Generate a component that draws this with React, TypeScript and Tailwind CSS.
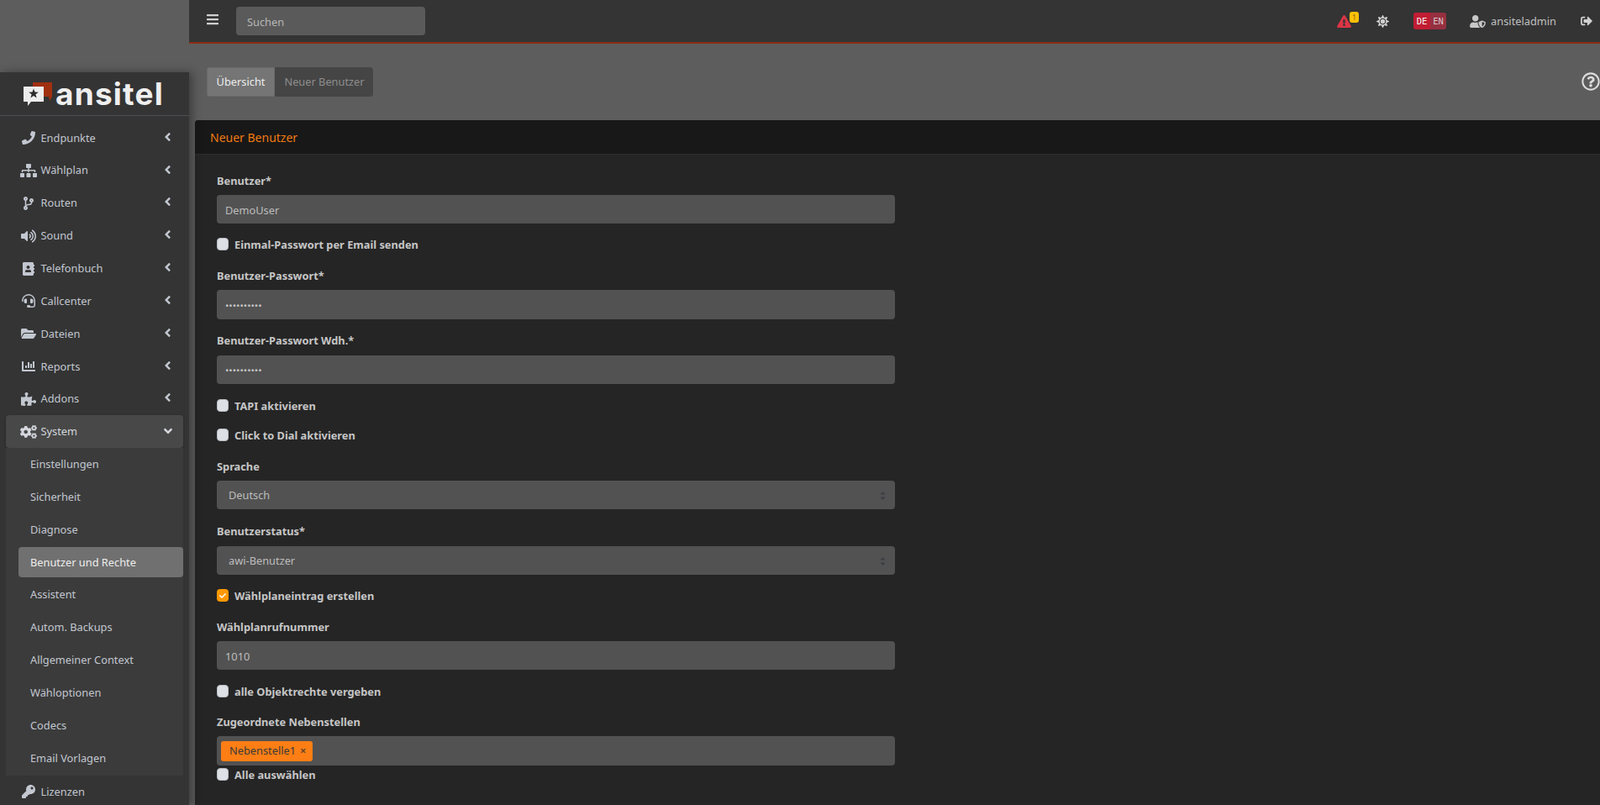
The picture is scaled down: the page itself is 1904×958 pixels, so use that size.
import type { ReactNode } from "react";
import {
  FaAddressBook,
  FaAngleDown,
  FaAngleLeft,
  FaBars,
  FaChartBar,
  FaCheck,
  FaCodeBranch,
  FaCogs,
  FaExclamationTriangle,
  FaFolderOpen,
  FaHeadset,
  FaKey,
  FaPhone,
  FaPuzzlePiece,
  FaRegQuestionCircle,
  FaSignOutAlt,
  FaSitemap,
  FaSun,
  FaUserShield,
  FaVolumeUp,
} from "react-icons/fa";

const font = "font-['Noto_Sans',sans-serif]";

const navTop = [
  { label: "Endpunkte", icon: <FaPhone className="w-[16px] h-[16px]" /> },
  { label: "Wählplan", icon: <FaSitemap className="w-[20px] h-[16px]" /> },
  { label: "Routen", icon: <FaCodeBranch className="w-[14px] h-[16px]" /> },
  { label: "Sound", icon: <FaVolumeUp className="w-[18px] h-[16px]" /> },
  { label: "Telefonbuch", icon: <FaAddressBook className="w-[14px] h-[16px]" /> },
  { label: "Callcenter", icon: <FaHeadset className="w-[16px] h-[16px]" /> },
  { label: "Dateien", icon: <FaFolderOpen className="w-[18px] h-[16px]" /> },
  { label: "Reports", icon: <FaChartBar className="w-[16px] h-[16px]" /> },
  { label: "Addons", icon: <FaPuzzlePiece className="w-[18px] h-[16px]" /> },
];

const subNav = [
  "Einstellungen",
  "Sicherheit",
  "Diagnose",
  "Benutzer und Rechte",
  "Assistent",
  "Autom. Backups",
  "Allgemeiner Context",
  "Wähloptionen",
  "Codecs",
  "Email Vorlagen",
];

function NavRow({ icon, label, open, noArrow }: { icon: ReactNode; label: string; open?: boolean; noArrow?: boolean }) {
  return (
    <div
      className={`flex items-center h-[38.85px] mx-[7px] w-[211px] text-[12.8px] ${
        open ? "bg-[#484848] rounded-[4px] shadow-[0_1px_3px_rgba(0,0,0,0.3)] text-[#d4d7dc]" : "text-[#c2c7d0]"
      }`}
    >
      <span className="ml-[14px] w-[26px] mr-[1.5px] flex justify-center shrink-0">{icon}</span>
      <span className="flex-1">{label}</span>
      {noArrow ? null : open ? (
        <FaAngleDown className="w-[14px] h-[16px] mr-[11px] -mt-[2px]" />
      ) : (
        <FaAngleLeft className="w-[11px] h-[16px] mr-[13px] -mt-[3px]" />
      )}
    </div>
  );
}

function Sidebar() {
  return (
    <aside className="w-[225px] shrink-0 mt-[86px] bg-[#343434] shadow-[4px_0_10px_rgba(0,0,0,0.35)] z-10 overflow-hidden">
      <div className="h-[52px] flex items-end border-b border-[#4b4f54] pl-[28px] pb-[11px]">
        <svg width="35" height="28" viewBox="0 0 35 28" className="shrink-0">
          <path d="M11 0h23v17l-3 5-1-5h-6V5H11z" fill="#a03010" />
          <path d="M0 5h24v18H9l-4 5v-5H0z" fill="#ededed" />
          <path
            d="M12 7.5l1.5 4 4.3.2-3.4 2.6 1.2 4.2-3.6-2.4-3.6 2.4 1.2-4.2-3.4-2.6 4.3-.2z"
            fill="#2a2a2a"
          />
        </svg>
        <span className="ml-[3px] text-[37px] leading-[28px] h-[28px] font-bold text-[#efefef] font-['Inter',sans-serif] tracking-[1.2px]">
          ansitel
        </span>
      </div>
      <div className="pt-[6.8px]">
        {navTop.map((item) => (
          <NavRow key={item.label} icon={item.icon} label={item.label} />
        ))}
        <NavRow icon={<FaCogs className="w-[20px] h-[16px]" />} label="System" open />
        <div className="mx-[7px] w-[211px] bg-[#3b3b3b] pb-[1px]">
          {subNav.map((label) =>
            label === "Benutzer und Rechte" ? (
              <div key={label} className="h-[38.85px] flex items-center">
                <div className="ml-[15px] w-[196px] h-[36px] bg-[#707070] rounded-[4px] flex items-center pl-[14px] text-[12.8px] text-[#eeeeee]">
                  {label}
                </div>
              </div>
            ) : (
              <div key={label} className="h-[38.85px] flex items-center pl-[29px] text-[12.8px] text-[#c2c7d0]">
                {label}
              </div>
            ),
          )}
        </div>
        <NavRow icon={<FaKey className="w-[16px] h-[16px]" />} label="Lizenzen" noArrow />
      </div>
    </aside>
  );
}

function Topbar() {
  return (
    <header className="h-[52px] shrink-0 bg-[#343434] border-b-2 border-[#8a2d12] flex items-center text-[#c8c8c8]">
      <FaBars className="ml-[21px] w-[14px] h-[16px] text-[#d0d0d0] -mt-[5px]" />
      <input
        readOnly
        placeholder="Suchen"
        className="ml-[21px] w-[225px] h-[34px] rounded-[4px] bg-[#5a5a5a] pl-[13px] pt-[1px] text-[12.8px] text-[#c0c0c0] placeholder:text-[#b8b8b8] outline-none"
      />
      <div className="flex-1" />
      <div className="relative">
        <FaExclamationTriangle className="w-[17px] h-[15px] text-[#dc3545]" />
        <span className="absolute -top-[4px] left-[15px] w-[11px] h-[13px] bg-[#ffc107] rounded-[3px] text-[8px] leading-[13px] text-center text-[#7a5b00]">
          1
        </span>
      </div>
      <FaSun className="ml-[30px] w-[15px] h-[15px] text-[#cfcfcf]" />
      <div className="ml-[29px] flex h-[20px] w-[39px] rounded-[3px] overflow-hidden text-[10.5px] leading-[20px] text-center font-['DejaVu_Sans_Mono',monospace]">
        <span className="w-[20px] bg-[#c11d33] text-[#f5f5f5]">DE</span>
        <span className="w-[19px] bg-[#963040] text-[#d8c4c8]">EN</span>
      </div>
      <FaUserShield className="ml-[28px] w-[19px] h-[15px] text-[#c8c8c8]" />
      <span className="ml-[6px] text-[12.8px] text-[#c0c0c0] mt-[1px]">ansiteladmin</span>
      <FaSignOutAlt className="ml-[29px] mr-[9px] w-[14px] h-[14px] text-[#d0d0d0]" />
    </header>
  );
}

function Label({ children, className = "" }: { children: ReactNode; className?: string }) {
  return (
    <div className={`h-[20px] leading-[20px] text-[12.8px] font-bold text-[#c6c6c6] ${className}`}>{children}</div>
  );
}

function Check({ label, checked, className = "" }: { label: string; checked?: boolean; className?: string }) {
  return (
    <div className={`flex items-center h-[20px] ${className}`}>
      <span
        className={`w-[14px] h-[15px] rounded-[4px] flex items-center justify-center shrink-0 -mt-[1px] ${
          checked ? "bg-[#ff9800]" : "bg-[#dde1e6] border border-[#b8bcc2]"
        }`}
      >
        {checked && <FaCheck className="w-[8px] h-[8px] text-white" />}
      </span>
      <span className="ml-[7px] text-[12.8px] font-bold text-[#c6c6c6] mt-[2px]">{label}</span>
    </div>
  );
}

function TextInput({ value, className = "" }: { value: string; className?: string }) {
  return (
    <input
      readOnly
      type="text"
      value={value}
      className={`block w-[807px] h-[34px] rounded-[4px] bg-[#525252] pl-[10px] pt-[2px] text-[12.8px] text-[#bdbdbd] outline-none ${className}`}
    />
  );
}

function PasswordInput({ className = "" }: { className?: string }) {
  return (
    <input
      readOnly
      type="password"
      value="1234567890"
      className={`block w-[807px] rounded-[4px] bg-[#525252] pl-[10px] pt-[1px] text-[11.6px] text-[#c4c4c4] outline-none ${className}`}
    />
  );
}

function SelectBox({ value, className = "" }: { value: string; className?: string }) {
  return (
    <div className={`relative w-[807px] h-[34px] ${className}`}>
      <select className="appearance-none w-full h-full rounded-[4px] bg-[#525252] pl-[14px] pt-[2px] text-[12.8px] text-[#bdbdbd] outline-none">
        <option>{value}</option>
      </select>
      <svg width="7" height="10" viewBox="0 0 7 10" className="absolute right-[11px] top-[13px]">
        <path d="M3.5 0l3 3.6H.5zM3.5 10L.5 6.4h6z" fill="#3a3d43" />
      </svg>
    </div>
  );
}

export default function App() {
  return (
    <div className={`flex w-[1904px] h-[958px] overflow-hidden bg-[#5d5d5d] ${font}`}>
      <Sidebar />
      <main className="flex-1 flex flex-col min-w-0">
        <Topbar />
        <div className="h-[91px] shrink-0 flex items-start justify-between">
          <div className="ml-[21px] mt-[28px] flex h-[35px] rounded-[4px] overflow-hidden bg-[#454545] text-[12.8px]">
            <span className="w-[81px] pt-[1px] bg-[#757575] border border-[#6a6a6a] flex items-center justify-center text-[#eeeeee]">
              Übersicht
            </span>
            <span className="w-[117px] pt-[1px] pl-[1px] flex items-center justify-center text-[#8e8e8e]">
              Neuer Benutzer
            </span>
          </div>
          <FaRegQuestionCircle className="mt-[34px] w-[22px] h-[22px] text-[#dcdcdc]" />
        </div>
        <section className="ml-[7px] flex-1 bg-[#252525] rounded-tl-[4px] overflow-hidden">
          <div className="h-[41px] bg-[#181818] border-b border-[#2e2e2e] flex items-center pl-[18px] text-[14px] text-[#f07a12]">
            Neuer Benutzer
          </div>
          <form className="pl-[26px] pt-[21px]">
            <Label>Benutzer*</Label>
            <TextInput value="DemoUser" className="mt-[7px]" />
            <Check label="Einmal-Passwort per Email senden" className="mt-[15px]" />
            <Label className="mt-[17px]">Benutzer-Passwort*</Label>
            <PasswordInput className="mt-[7px] h-[35px]" />
            <Label className="mt-[15px]">Benutzer-Passwort Wdh.*</Label>
            <PasswordInput className="mt-[8px] h-[34px]" />
            <Check label="TAPI aktivieren" className="mt-[16px]" />
            <Check label="Click to Dial aktivieren" className="mt-[15px]" />
            <Label className="mt-[17px]">Sprache</Label>
            <SelectBox value="Deutsch" className="mt-[7px]" />
            <Label className="mt-[16px]">Benutzerstatus*</Label>
            <SelectBox value="awi-Benutzer" className="mt-[8px]" />
            <Check label="Wählplaneintrag erstellen" checked className="mt-[15px]" />
            <Label className="mt-[17px]">Wählplanrufnummer</Label>
            <TextInput value="1010" className="mt-[7px]" />
            <Check label="alle Objektrechte vergeben" className="mt-[16px]" />
            <Label className="mt-[16px]">Zugeordnete Nebenstellen</Label>
            <div className="mt-[7px] w-[807px] h-[35px] rounded-[4px] bg-[#525252] flex items-center pl-[5px]">
              <span className="h-[24px] w-[109px] rounded-[3px] bg-[#fd7e14] flex items-center pl-[10px] text-[12.8px] text-[#3a3a3a]">
                Nebenstelle1
                <span className="ml-[5px] text-[13px] font-bold text-[#6a4a2a]">×</span>
              </span>
            </div>
            <Check label="Alle auswählen" className="mt-px" />
          </form>
        </section>
      </main>
    </div>
  );
}
